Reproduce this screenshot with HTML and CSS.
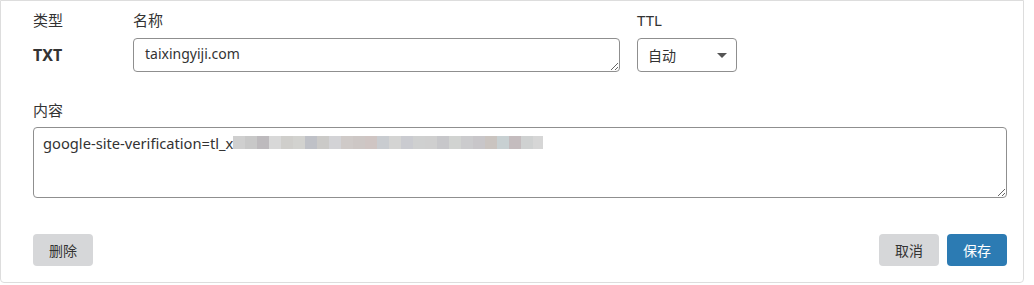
FILE: index.html
```html
<!DOCTYPE html>
<html lang="zh-CN">
  <head>
    <meta charset="UTF-8" />
    <title>编辑记录</title>
    <link rel="stylesheet" href="styles.css">
  </head>
  <body>
    <div class="card">
      <div class="row">
        <div class="col col-type">
          <label>类型</label>
          <div class="type-value">TXT</div>
        </div>
        <div class="col col-name">
          <label>名称</label>
          <textarea class="field name-field">taixingyiji.com</textarea>
        </div>
        <div class="col col-ttl">
          <label>TTL</label>
          <div class="select-wrap">
            <select class="field ttl-select">
              <option>自动</option>
            </select>
          </div>
        </div>
      </div>

      <div class="content-block">
        <label>内容</label>
        <div class="content-box">
          <textarea class="field content-field"></textarea>
          <div class="content-text">google-site-verification=tl_x<span class="masked"></span></div>
        </div>
      </div>

      <div class="actions">
        <button class="btn btn-grey">删除</button>
        <div class="actions-right">
          <button class="btn btn-grey">取消</button>
          <button class="btn btn-blue">保存</button>
        </div>
      </div>
    </div>
  </body>
</html>
```

FILE: styles.css
```css
body {
  margin: 0;
  background: #fff;
  font-family: "Noto Sans", "Noto Sans CJK SC", sans-serif;
  color: #333;
}

.card {
  width: 1024px;
  height: 283px;
  box-sizing: border-box;
  border: 1px solid #ddd;
  border-radius: 0 0 4px 4px;
  padding: 9px 16px 0 32px;
}

label {
  display: block;
  font-size: 15px;
  line-height: 20px;
  color: #333;
}

.row {
  display: flex;
}

.col label {
  margin-bottom: 8px;
}

.col-type {
  width: 100px;
}

.type-value {
  height: 34px;
  line-height: 34px;
  font-size: 16px;
  font-weight: bold;
}

.col-name {
  width: 487px;
  margin-right: 17px;
}

.col-ttl {
  width: 100px;
}

.field {
  box-sizing: border-box;
  width: 100%;
  border: 1px solid #8f8f8f;
  border-radius: 4px;
  background: #fff;
  font-family: "Noto Sans", "Noto Sans CJK SC", sans-serif;
  font-size: 14px;
  color: #333;
  outline: none;
}

.name-field {
  display: block;
  height: 34px;
  padding: 5px 11px;
  line-height: 20px;
  overflow: hidden;
}

.select-wrap {
  position: relative;
}

.select-wrap::after {
  content: "";
  position: absolute;
  right: 10px;
  top: 15px;
  border-left: 5px solid transparent;
  border-right: 5px solid transparent;
  border-top: 5px solid #555;
  pointer-events: none;
}

.ttl-select {
  display: block;
  height: 34px;
  padding: 0 10px;
  appearance: none;
  -webkit-appearance: none;
}

.content-block {
  margin-top: 28px;
}

.content-block label {
  margin-bottom: 7px;
}

.content-box {
  position: relative;
}

.content-field {
  display: block;
  height: 71px;
  resize: vertical;
}

.content-text {
  position: absolute;
  left: 10px;
  top: 6px;
  font-size: 14.7px;
  line-height: 20px;
  white-space: nowrap;
  pointer-events: none;
}

.masked {
  display: inline-block;
  vertical-align: top;
  width: 310px;
  height: 13px;
  margin-top: 3px;
  background: linear-gradient(90deg,
    #cfcfcf 0 12px, #c8c8c8 12px 24px, #bdbabd 24px 36px, #d8d8d8 36px 48px,
    #cfcecb 48px 60px, #d2d2cf 60px 72px, #bfc1c7 72px 84px, #cbcac8 84px 96px,
    #d3d3d6 96px 108px, #cfcac8 108px 120px, #cdc7c5 120px 132px, #cfc5c3 132px 144px,
    #c9ccd0 144px 156px, #d4d4d3 156px 168px, #cacbd0 168px 180px, #cfd0d0 180px 192px,
    #cfcfcf 192px 204px, #c7c7ca 204px 216px, #d1d3d1 216px 228px, #cbcbcd 228px 240px,
    #c8c6c9 240px 252px, #cac4c0 252px 264px, #c8d0d2 264px 276px, #c4bcbe 276px 288px,
    #cfd1d1 288px 300px, #d6d6d6 300px 310px);
}

.actions {
  display: flex;
  justify-content: space-between;
  margin-top: 36px;
}

.actions-right {
  display: flex;
  gap: 8px;
}

.btn {
  width: 60px;
  height: 32px;
  border: none;
  border-radius: 4px;
  font-family: "Noto Sans CJK SC", sans-serif;
  font-size: 14px;
  cursor: pointer;
}

.btn-grey {
  background: #d6d7d9;
  color: #333;
}

.btn-blue {
  background: #2c7bb3;
  color: #fff;
}
```
